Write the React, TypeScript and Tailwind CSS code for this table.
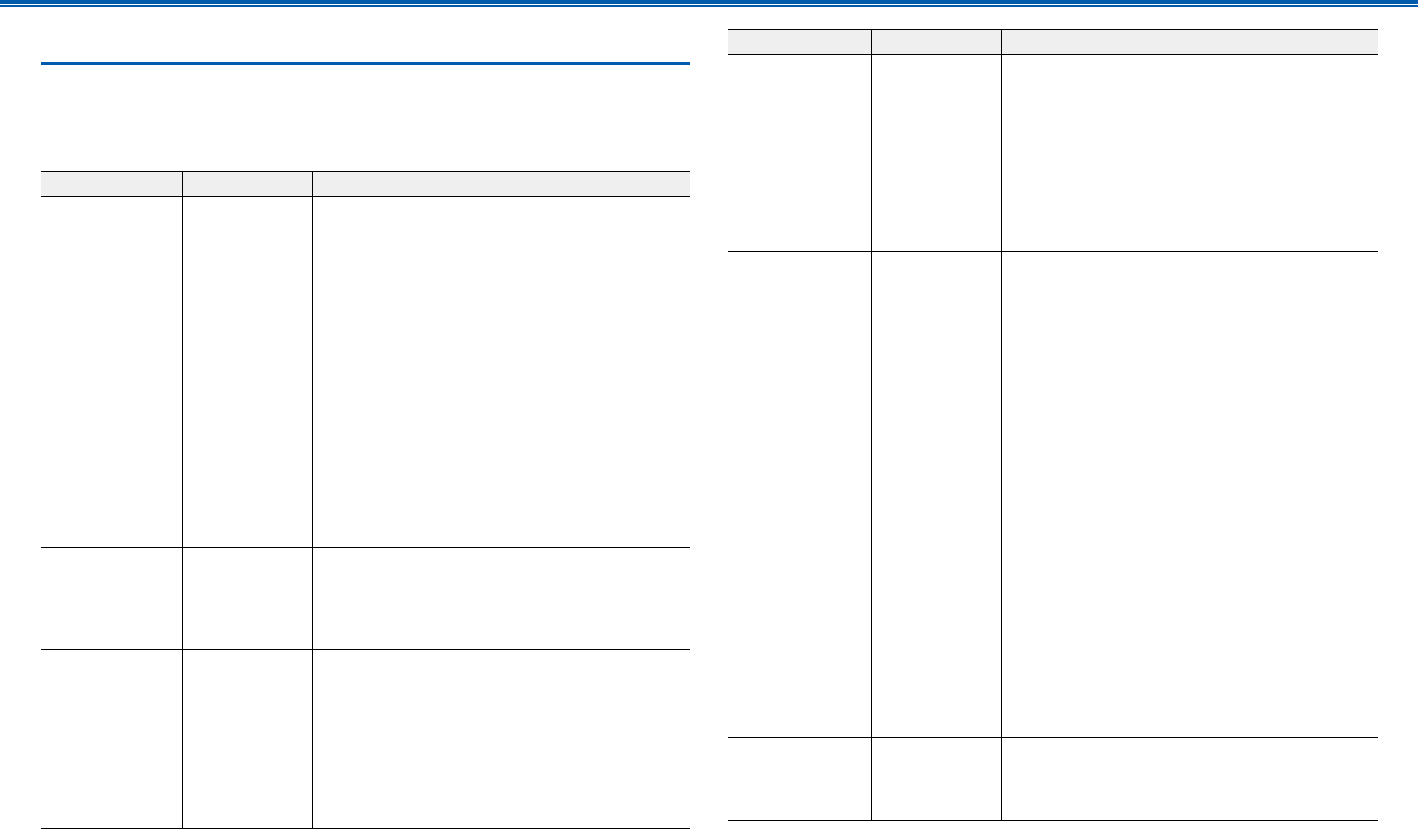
import React from "react";

export default function App() {
  return (
    <div className="w-[1418px] h-[829px] bg-white overflow-hidden font-['Liberation_Sans',sans-serif]">
      <div className="h-[4px] bg-[#005bac]" />
      <div className="h-[1px] bg-white" />
      <div className="h-[2px] bg-[#005bac]" />
      <div className="flex ml-[41px] gap-[38px]">
        <div className="w-[649px] flex flex-col">
          <div className="mt-[55px] h-[3px] bg-[#005bac]" />
          <div className="mt-[106px]">
            <div className="border-t border-black">
              <div className="grid grid-cols-[141px_130px_1fr] h-[25px] bg-[#efefef] border-b border-black">
                <div />
                <div className="border-l border-black" />
                <div className="border-l border-black" />
              </div>
              {[351, 102, 179].map((h, i) => (
                <div key={i} className="grid grid-cols-[141px_130px_1fr] border-b border-black" style={{ height: h }}>
                  <div />
                  <div className="border-l border-black" />
                  <div className="border-l border-black" />
                </div>
              ))}
            </div>
          </div>
        </div>
        <div className="w-[650px] flex flex-col">
          <div className="mt-[22px]">
            <div className="border-t border-black">
              <div className="grid grid-cols-[143px_130px_1fr] h-[25px] bg-[#efefef] border-b border-black">
                <div />
                <div className="border-l border-black" />
                <div className="border-l border-black" />
              </div>
              {[197, 486, 83].map((h, i) => (
                <div key={i} className="grid grid-cols-[143px_130px_1fr] border-b border-black" style={{ height: h }}>
                  <div />
                  <div className="border-l border-black" />
                  <div className="border-l border-black" />
                </div>
              ))}
            </div>
          </div>
        </div>
      </div>
    </div>
  );
}
